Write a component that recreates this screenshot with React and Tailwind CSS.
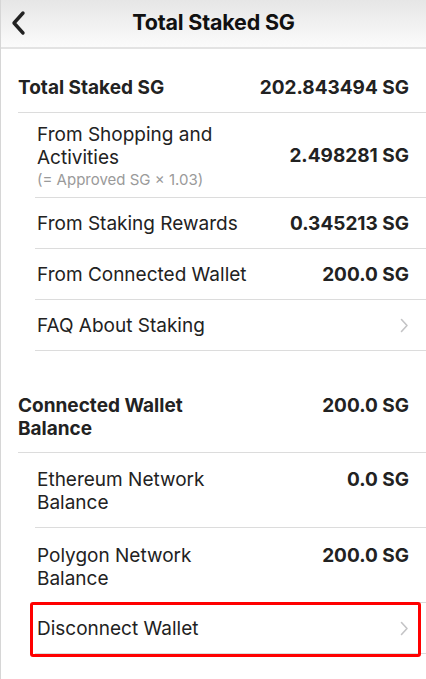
import React from "react";

const font = { fontFamily: "Inter, 'Noto Sans', sans-serif" };

function Chevron() {
  return (
    <svg width="9" height="15" viewBox="0 0 9 15" fill="none">
      <path d="M1.5 1.5 L7 7.5 L1.5 13.5" stroke="#c4c4c6" strokeWidth="1.6" strokeLinecap="round" strokeLinejoin="round" />
    </svg>
  );
}

function SubRow({ label, value, chevron }) {
  return (
    <div className="ml-[34px] pr-[17px] h-[51px] flex items-center justify-between border-b border-[#dcdcdc]">
      <div className="pl-[2px] text-[19px] leading-[23px] text-[#222]">{label}</div>
      {value && <div className="text-[19px] leading-[23px] font-bold text-[#222] whitespace-nowrap">{value}</div>}
      {chevron && <Chevron />}
    </div>
  );
}

export default function App() {
  return (
    <div className="w-[426px] h-[679px] bg-white border-l border-[#d6d6d6] overflow-hidden" style={font}>
      <div className="h-[49px] bg-gradient-to-b from-[#e6e6e6] to-[#fbfbfb] border-b-2 border-[#e3e3e3] relative flex items-center justify-center">
        <svg className="absolute left-[9px] top-[10px]" width="17" height="26" viewBox="0 0 17 26" fill="none">
          <path d="M13 3 L4 13 L13 23" stroke="#222" strokeWidth="3.4" strokeLinecap="round" strokeLinejoin="round" />
        </svg>
        <div className="text-[21.5px] font-bold text-[#111] -mt-[2px] tracking-[-0.2px]">Total Staked SG</div>
      </div>

      <div className="pt-[14px]">
        <div className="ml-[17px] pr-[17px] h-[50px] flex items-center justify-between border-b border-[#dcdcdc]">
          <div className="text-[19px] font-bold text-[#222] pt-[2px]">Total Staked SG</div>
          <div className="text-[19px] font-bold text-[#222] pt-[2px]">202.843494 SG</div>
        </div>
        <div className="ml-[34px] pr-[17px] h-[85px] flex items-center justify-between border-b border-[#dcdcdc]">
          <div className="pl-[2px] pt-[3px] flex flex-col">
            <div className="text-[19px] leading-[23px] text-[#222]">From Shopping and<br />Activities</div>
            <div className="text-[15px] leading-[21px] text-[#9a9a9a]">(= Approved SG × 1.03)</div>
          </div>
          <div className="text-[19px] font-bold text-[#222] pt-[3px]">2.498281 SG</div>
        </div>
        <SubRow label="From Staking Rewards" value="0.345213 SG" />
        <SubRow label="From Connected Wallet" value="200.0 SG" />
        <SubRow label="FAQ About Staking" chevron />

        <div className="h-[40px]" />

        <div className="ml-[17px] pr-[17px] h-[62px] flex justify-between border-b border-[#dcdcdc]">
          <div className="pt-[3px] text-[19px] leading-[23px] font-bold text-[#222]">Connected Wallet<br />Balance</div>
          <div className="pt-[3px] text-[19px] leading-[23px] font-bold text-[#222]">200.0 SG</div>
        </div>
        <div className="ml-[34px] pr-[17px] h-[75px] flex justify-between border-b border-[#dcdcdc]">
          <div className="pl-[2px] pt-[15px] text-[19px] leading-[23px] text-[#222]">Ethereum Network<br />Balance</div>
          <div className="pt-[15px] text-[19px] leading-[23px] font-bold text-[#222]">0.0 SG</div>
        </div>
        <div className="ml-[34px] pr-[17px] h-[75px] flex justify-between border-b border-[#dcdcdc]">
          <div className="pl-[2px] pt-[16px] text-[19px] leading-[23px] text-[#222]">Polygon Network<br />Balance</div>
          <div className="pt-[16px] text-[19px] leading-[23px] font-bold text-[#222]">200.0 SG</div>
        </div>
        <div className="relative ml-[34px] pr-[17px] h-[51px] flex items-center justify-between border-b border-[#dcdcdc]">
          <div className="pl-[2px] pt-[2px] text-[19px] text-[#222]">Disconnect Wallet</div>
          <Chevron />
          <div className="absolute left-[-5px] right-[5px] top-[-1px] bottom-[-4px] border-[3px] border-[#ff0000] rounded-[3px]" />
        </div>
      </div>
    </div>
  );
}
